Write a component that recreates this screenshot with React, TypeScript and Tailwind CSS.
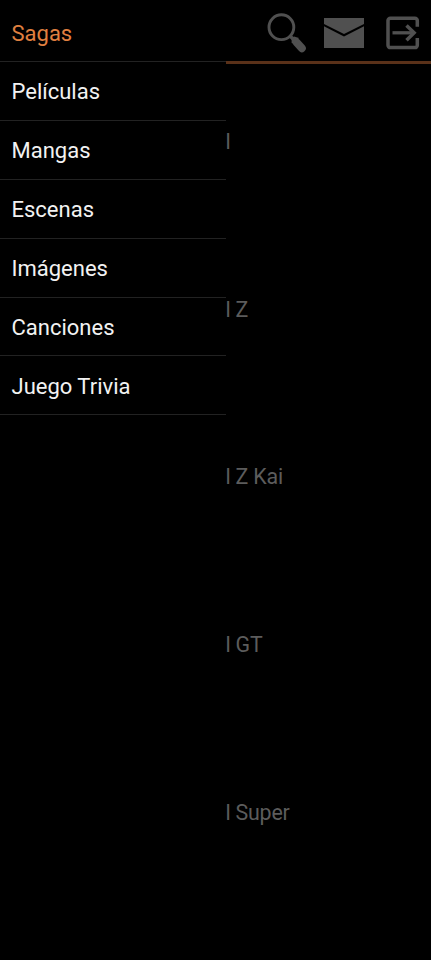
const menu = ["Sagas", "Películas", "Mangas", "Escenas", "Imágenes", "Canciones", "Juego Trivia"];
const series = ["l", "l Z", "l Z Kai", "l GT", "l Super"];

function SearchIcon() {
  return (
    <svg className="h-10 w-10" viewBox="0 0 40 40" fill="none" stroke="currentColor">
      <circle cx="14.4" cy="14.2" r="12.4" strokeWidth="2.9" />
      <path d="M23.3 23.3l4 4" strokeWidth="3.4" />
      <path d="M29.6 29.4l5.2 5.8" strokeWidth="8" strokeLinecap="round" />
      <path d="M24.6 30l0-4.8 2.4-1.6 5 1.4-5.6 5.6z" fill="currentColor" stroke="none" />
    </svg>
  );
}

function MailIcon() {
  return (
    <svg className="h-[30px] w-10" viewBox="0 0 40 30" fill="currentColor">
      <path d="M0 0h40v5.9L20 16.1 0 5.9z" />
      <path d="M0 8.3l20 10.2L40 8.3V30H0z" />
    </svg>
  );
}

function ExitIcon() {
  return (
    <svg className="h-[34px] w-[34px]" viewBox="0 0 34 34" fill="none" stroke="currentColor">
      <path
        d="M31.3 10.8V4.6a2.4 2.4 0 0 0-2.4-2.4H4.4A2.4 2.4 0 0 0 2 4.6v24.6a2.4 2.4 0 0 0 2.4 2.4h24.5a2.4 2.4 0 0 0 2.4-2.4v-7.2"
        strokeWidth="3.5"
      />
      <path d="M6.5 16.8h21" strokeWidth="3.3" />
      <path d="M20.5 9.4l7.6 7.4-7.6 7.4" strokeWidth="3.5" />
    </svg>
  );
}

export default function App() {
  return (
    <div className="flex h-[960px] w-full overflow-hidden bg-black font-[Roboto,sans-serif] text-[22px]">
      <nav className="w-[226px] shrink-0 pt-[3.4px]">
        <ul>
          {menu.map((item, i) => (
            <li
              key={item}
              className={`flex h-[58.85px] items-center border-b border-[#222222] pt-[1.4px] pl-[11.5px] ${
                i === 0 ? "text-[#e08040]" : "text-[#f2f2f2]"
              }`}
            >
              {item}
            </li>
          ))}
        </ul>
      </nav>
      <main className="flex min-w-0 flex-1 flex-col">
        <header className="flex h-16 shrink-0 items-center border-b-[3px] border-[#5a3119] pt-1 pl-[41px] text-[#505050]">
          <SearchIcon />
          <span className="ml-[17px]">
            <MailIcon />
          </span>
          <span className="ml-[22px]">
            <ExitIcon />
          </span>
        </header>
        <ul className="-mt-1.5 text-[21.4px] tracking-[-0.2px] text-[#5c5c5c]">
          {series.map((item) => (
            <li key={item} className="flex h-[167.8px] items-center whitespace-pre">
              <span className="-ml-[0.6px]">{item}</span>
            </li>
          ))}
        </ul>
      </main>
    </div>
  );
}
